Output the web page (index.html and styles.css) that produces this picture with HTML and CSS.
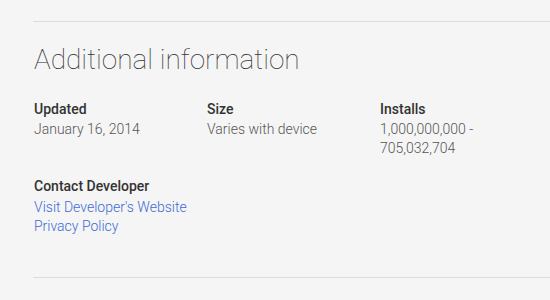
FILE: index.html
```html
<!DOCTYPE html>
<html>
<head>
<meta charset="utf-8">
<link rel="stylesheet" href="styles.css">
</head>
<body>
<div class="section">
  <hr class="rule">
  <h2 class="heading">Additional information</h2>
  <div class="meta">
    <div class="item">
      <div class="label">Updated</div>
      <div class="value">January 16, 2014</div>
    </div>
    <div class="item">
      <div class="label">Size</div>
      <div class="value">Varies with device</div>
    </div>
    <div class="item">
      <div class="label">Installs</div>
      <div class="value">1,000,000,000 -<br>705,032,704</div>
    </div>
    <div class="item">
      <div class="label contact">Contact Developer</div>
      <a class="link" href="#">Visit Developer's Website</a>
      <a class="link" href="#">Privacy Policy</a>
    </div>
  </div>
  <hr class="rule bottom">
</div>
</body>
</html>
```
FILE: styles.css
```css
html, body {
  margin: 0;
  padding: 0;
  background: #f5f5f5;
}
body {
  font-family: Roboto, "Noto Sans", sans-serif;
  color: #333;
}
.section {
  padding: 21px 0 0 33px;
}
.rule {
  margin: 0;
  border: 0;
  height: 1px;
  background: #dcdcdc;
}
.heading {
  margin: 21px 0 0 1px;
  font-size: 28px;
  font-weight: 100;
  line-height: 34px;
  color: #333;
}
.meta {
  display: grid;
  grid-template-columns: 173px 173px 173px;
  row-gap: 19px;
  margin: 23px 0 0 1px;
}
.item {
  display: flex;
  flex-direction: column;
}
.label {
  font-size: 14px;
  font-weight: 500;
  line-height: 19px;
  color: #333;
  margin-bottom: 1px;
}
.label.contact {
  margin-bottom: 2px;
}
.value {
  font-size: 14px;
  font-weight: 300;
  line-height: 19px;
  color: #555;
}
.link {
  font-size: 14px;
  font-weight: 300;
  line-height: 19px;
  color: #3d6bd6;
  text-decoration: none;
}
.bottom {
  margin-top: 41px;
}
```
